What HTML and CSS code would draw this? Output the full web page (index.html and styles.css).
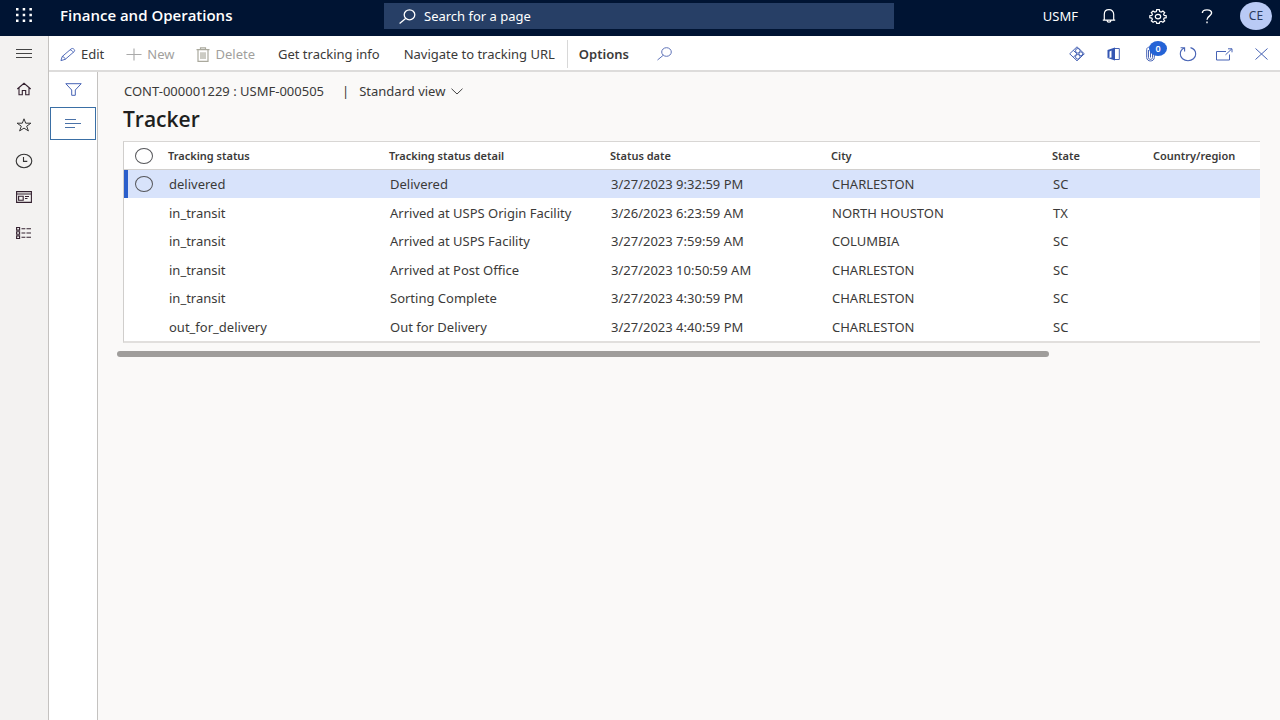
FILE: index.html
```html
<!DOCTYPE html>
<html lang="en">
<head>
    <meta charset="UTF-8">
    <meta name="viewport" content="width=device-width, initial-scale=1.0">
    <title>Tracker - Finance and Operations</title>
    <link rel="stylesheet" href="styles.css">
</head>
<body>
    <header class="topbar">
        <div class="brand">
            <button class="waffle" aria-label="App launcher">
                <svg width="16" height="14" viewBox="0 0 16 14" fill="#fff">
                    <path d="M0 0h2.500v2.500H0zM6.700 0h2.500v2.500H6.700zM13.400 0h2.500v2.500h-2.500zM0 5.700h2.500v2.500H0zM6.700 5.700h2.500v2.500H6.700zM13.400 5.700h2.500v2.500h-2.500zM0 11.400h2.500v2.500H0zM6.700 11.400h2.500v2.500H6.700zM13.400 11.400h2.500v2.500h-2.500z"/>
                </svg>
            </button>
            <span class="brand-name">Finance and Operations</span>
        </div>
        <label class="search">
            <svg width="17" height="15" viewBox="0 0 17 15" fill="none" stroke="#fff" stroke-width="1.3">
                <ellipse cx="10.500" cy="5.800" rx="5.300" ry="5"/>
                <path d="M6.600 9.500L.6 14.400"/>
            </svg>
            <input type="text" placeholder="Search for a page" aria-label="Search for a page">
        </label>
        <div class="account">
            <button class="company">USMF</button>
            <button class="top-icon" aria-label="Notifications">
                <svg width="14" height="14" viewBox="0 0 14 14" fill="none" stroke="#fff" stroke-width="1.2">
                    <path d="M.8 11.200h12.400M2.300 11V5.500C2.300 2.500 4.300.7 7 .7s4.700 1.800 4.700 4.800V11M5 11.400c.2 2.400 3.800 2.400 4 0"/>
                </svg>
            </button>
            <button class="top-icon" aria-label="Settings">
                <svg width="18" height="15" viewBox="0 0 18 15" fill="none" stroke="#fff" stroke-width="1.200">
                    <path d="M7.700.7h2.600l.4 1.800 1.500.6 1.700-1 1.800 1.600-1.100 1.500.6 1.200 2 .3v2l-2 .4-.6 1.200 1.100 1.500-1.800 1.500-1.700-1-1.500.6-.4 1.500H7.700l-.4-1.500-1.500-.6-1.700 1-1.800-1.500 1.100-1.500-.6-1.200-2-.4v-2l2-.3.6-1.200-1.100-1.500L4.100 2.100l1.700 1 1.500-.6z"/>
                    <ellipse cx="9" cy="7.600" rx="2.700" ry="2.300"/>
                </svg>
            </button>
            <button class="top-icon" aria-label="Help">
                <svg width="12" height="15" viewBox="0 0 12 15" fill="none" stroke="#fff" stroke-width="1.400">
                    <path d="M1.400 4C1.400 2 3.200.9 6 .9s4.600 1.300 4.600 3.200C10.600 6.800 6 7 6 10.800M6 12.600v1.600"/>
                </svg>
            </button>
            <button class="avatar">CE</button>
        </div>
    </header>

    <div class="shell">
        <nav class="rail">
            <button aria-label="Expand the navigation pane">
                <svg width="16" height="16" viewBox="0 0 16 16" fill="none" stroke="#444" stroke-width="1"><path d="M0 4.500h16M0 8.500h16M0 12.500h16"/></svg>
            </button>
            <button aria-label="Home">
                <svg width="16" height="16" viewBox="0 0 16 16" fill="none" stroke="#33202f" stroke-width="1.100"><path d="M1.300 8L8 2.300 14.700 8M3 6.800v6.900h3.300V9.500h3.400v4.200H13V6.800"/></svg>
            </button>
            <button aria-label="Favorites">
                <svg width="16" height="16" viewBox="0 0 16 16" fill="none" stroke="#333" stroke-width="1"><path d="M8 1.800l1.700 4.400h5.200l-4.200 3 1.700 4.700L8 11.100 3.600 13.900l1.700-4.700-4.200-3h5.200z"/></svg>
            </button>
            <button aria-label="Recent">
                <svg width="18" height="16" viewBox="0 0 18 16" fill="none" stroke="#333" stroke-width="1.100"><ellipse cx="9" cy="8" rx="7.800" ry="6.700"/><path d="M8.500 4v4.400h3.800"/></svg>
            </button>
            <button aria-label="Workspaces">
                <svg width="16" height="16" viewBox="0 0 16 16" fill="none" stroke="#33202f" stroke-width="1.100"><path d="M.6 2.600h14.800v10.800H.6zM.6 5h14.800M2.600 7.200h4.600v4H2.600zM9 7.500h4M9 9.500h2.500"/></svg>
            </button>
            <button aria-label="Modules">
                <svg width="16" height="16" viewBox="0 0 16 16" fill="none" stroke="#33202f" stroke-width="1.100"><path d="M.6 2.500h3v2.600h-3zM.6 6.700h3v2.600h-3zM.6 10.900h3v2.600h-3zM5.500 3.800h3.800M10.500 3.800H15M5.500 8h3.800M10.500 8H15M5.500 12.200h3.800M10.500 12.200H15"/></svg>
            </button>
        </nav>

        <div class="workspace">
            <div class="actions">
                <button class="action">
                    <svg width="16" height="15" viewBox="0 0 17 15" fill="none" stroke="#4763b5" stroke-width="1"><path d="M1 14l1.300-4.300L12 1.400c1.300-1.200 4.500 1 3.300 2.800L5.600 12.600zM2.300 9.700c1.700.2 3 1.200 3.300 2.900M10.700 2.500c1.600.3 2.900 1.400 3.300 2.800"/></svg>
                    Edit
                </button>
                <button class="action" disabled>
                    <svg width="16" height="15" viewBox="0 0 17 15" fill="none" stroke="#aaa" stroke-width="1.200"><path d="M.5 7.500h16M8.500 1v13"/></svg>
                    New
                </button>
                <button class="action" disabled>
                    <svg width="14" height="15" viewBox="0 0 14 15" fill="none" stroke="#aaa99d" stroke-width="1.200"><path d="M.5 2.700h13M4.500 2.500V.8h5v1.700M2 3v11.300h10V3M5 5.200v6.800M7 5.200v6.800M9 5.200v6.800"/></svg>
                    Delete
                </button>
                <button class="action text">Get tracking info</button>
                <button class="action text">Navigate to tracking URL</button>
                <button class="action options">Options</button>
                <button class="action find" aria-label="Search actions">
                    <svg width="15" height="14" viewBox="0 0 15 14" fill="none" stroke="#5f73b8" stroke-width="1"><ellipse cx="9.500" cy="5" rx="4.800" ry="4.300"/><path d="M6.200 8.300L.5 13"/></svg>
                </button>
                <div class="tools">
                    <button aria-label="Power Apps">
                        <svg width="16" height="16" viewBox="0 0 16 16" fill="none" stroke="#4763b5" stroke-width="1"><path d="M8 .8l7.300 7L8 14.800.7 7.800zM4.300 4.400L8 7.800l-3.700 3.400"/><circle cx="8.800" cy="4.800" r="2.300"/><circle cx="11.800" cy="7.800" r="1.900"/><circle cx="8.800" cy="10.800" r="2.300"/></svg>
                    </button>
                    <button aria-label="Open in Microsoft Office">
                        <svg width="13" height="14" viewBox="0 0 13 14"><path d="M.5 3L8 .5v13L.5 11l4-.5V3.600L2.500 4.500v6L.5 11z" fill="#3557b3"/><path d="M8 1.500h4.300v11H8" fill="none" stroke="#4763b5"/></svg>
                    </button>
                    <button class="attach" aria-label="Attachments">
                        <svg width="9" height="16" viewBox="0 0 9 16" fill="none" stroke="#4763b5" stroke-width="1"><path d="M2.500 4v7.500c0 2.500 4 2.500 4 0V3.500C6.500.3.700.3.700 3.500v8c0 4.600 7.600 4.600 7.600 0V4M4.500 4v7.500"/></svg>
                        <span class="badge">0</span>
                    </button>
                    <button aria-label="Refresh">
                        <svg width="18" height="16" viewBox="0 0 18 16" fill="none" stroke="#4763b5" stroke-width="1.100"><path d="M11.500 1.600C14.500 2.500 16.700 5 16.700 8c0 3.800-3.400 6.700-7.700 6.700S1.300 11.800 1.300 8c0-2.500 1.500-4.800 3.900-5.900M1.600 1.800h4v3.700"/></svg>
                    </button>
                    <button aria-label="Open in new window">
                        <svg width="17" height="13" viewBox="0 0 17 13" fill="none" stroke="#4763b5" stroke-width="1"><path d="M10 3.500H.5v8.500h13V6.500M9.500 6.800L15.700 1M12 .8h4v3.500"/></svg>
                    </button>
                    <button aria-label="Close">
                        <svg width="13" height="12" viewBox="0 0 13 12" fill="none" stroke="#4763b5" stroke-width="1"><path d="M.5.500l12 11M12.500.500l-12 11"/></svg>
                    </button>
                </div>
            </div>

            <div class="content">
                <div class="pane-tabs">
                    <button aria-label="Show filters">
                        <svg width="17" height="13" viewBox="0 0 17 13" fill="none" stroke="#4763b5" stroke-width="1"><path d="M.8.700h15.400L10.300 7v5.300H6.700V7z"/></svg>
                    </button>
                    <button class="selected" aria-label="Show list">
                        <svg width="16" height="9" viewBox="0 0 16 9" fill="none" stroke="#4a72a8" stroke-width="1"><path d="M0 .5h11M0 4.500h16M0 8.500h10"/></svg>
                    </button>
                </div>

                <main class="page">
                    <div class="record">
                        <span>CONT-000001229 : USMF-000505</span>
                        <span class="separator">|</span>
                        <button class="view">
                            Standard view
                            <svg width="12" height="7" viewBox="0 0 12 7" fill="none" stroke="#444" stroke-width="1"><path d="M.5.700L6 6 11.500.700"/></svg>
                        </button>
                    </div>
                    <h1>Tracker</h1>

                    <table class="grid">
                        <colgroup>
                            <col class="col-select">
                            <col class="col-wide">
                            <col class="col-wide">
                            <col class="col-wide">
                            <col class="col-wide">
                            <col class="col-state">
                            <col>
                        </colgroup>
                        <thead>
                            <tr>
                                <th><input type="checkbox" aria-label="Select all rows"></th>
                                <th>Tracking status</th>
                                <th>Tracking status detail</th>
                                <th>Status date</th>
                                <th>City</th>
                                <th>State</th>
                                <th>Country/region</th>
                            </tr>
                        </thead>
                        <tbody>
                            <tr class="current">
                                <td><input type="checkbox" aria-label="Select row"></td>
                                <td>delivered</td>
                                <td>Delivered</td>
                                <td>3/27/2023 9:32:59 PM</td>
                                <td>CHARLESTON</td>
                                <td>SC</td>
                                <td></td>
                            </tr>
                            <tr>
                                <td></td>
                                <td>in_transit</td>
                                <td>Arrived at USPS Origin Facility</td>
                                <td>3/26/2023 6:23:59 AM</td>
                                <td>NORTH HOUSTON</td>
                                <td>TX</td>
                                <td></td>
                            </tr>
                            <tr>
                                <td></td>
                                <td>in_transit</td>
                                <td>Arrived at USPS Facility</td>
                                <td>3/27/2023 7:59:59 AM</td>
                                <td>COLUMBIA</td>
                                <td>SC</td>
                                <td></td>
                            </tr>
                            <tr>
                                <td></td>
                                <td>in_transit</td>
                                <td>Arrived at Post Office</td>
                                <td>3/27/2023 10:50:59 AM</td>
                                <td>CHARLESTON</td>
                                <td>SC</td>
                                <td></td>
                            </tr>
                            <tr>
                                <td></td>
                                <td>in_transit</td>
                                <td>Sorting Complete</td>
                                <td>3/27/2023 4:30:59 PM</td>
                                <td>CHARLESTON</td>
                                <td>SC</td>
                                <td></td>
                            </tr>
                            <tr>
                                <td></td>
                                <td>out_for_delivery</td>
                                <td>Out for Delivery</td>
                                <td>3/27/2023 4:40:59 PM</td>
                                <td>CHARLESTON</td>
                                <td>SC</td>
                                <td></td>
                            </tr>
                        </tbody>
                    </table>
                    <div class="scrollbar"></div>
                </main>
            </div>
        </div>
    </div>
</body>
</html>
```
FILE: styles.css
```css
* {
    box-sizing: border-box;
}
body {
    margin: 0;
    min-height: 100vh;
    display: flex;
    flex-direction: column;
    background: #faf9f8;
    color: #3b3a39;
    font-family: "Noto Sans", "Open Sans", sans-serif;
    font-size: 13px;
    line-height: 20px;
}
button {
    display: flex;
    align-items: center;
    justify-content: center;
    padding: 0;
    border: 0;
    background: none;
    color: inherit;
    font: inherit;
    white-space: nowrap;
}
svg {
    flex: none;
}

/* top bar */
.topbar {
    display: flex;
    height: 36px;
    background: #001433;
    color: #fff;
}
.brand {
    display: flex;
    width: 30%;
    padding-bottom: 6px;
    align-items: center;
}
.waffle {
    width: 48px;
    margin-right: 12px;
}
.brand-name {
    font-family: "Open Sans", sans-serif;
    font-size: 15px;
    font-weight: 600;
}
.search {
    display: flex;
    align-items: center;
    gap: 8px;
    width: 510px;
    height: 26px;
    margin-top: 3px;
    padding-left: 15px;
    background: #273f66;
}
.search input {
    flex: 1;
    padding: 0;
    border: 0;
    background: none;
    color: #fff;
    font: inherit;
}
.search input::placeholder {
    color: #fff;
    opacity: 1;
}
.account {
    display: flex;
    align-items: center;
    margin-left: auto;
    padding: 0 8px 4px 0;
}
.company {
    margin-right: 6px;
}
.top-icon {
    width: 49px;
    height: 32px;
}
.avatar {
    width: 32px;
    height: 28px;
    margin-left: 9px;
    border-radius: 50%;
    background: #b9caf5;
    color: #2b3a5c;
    font-size: 12px;
}

/* left navigation */
.shell {
    display: flex;
    flex: 1;
}
.rail {
    width: 49px;
    border-right: 1px solid #c4c2c0;
    background: #f3f2f1;
}
.rail button {
    width: 48px;
    height: 36px;
    padding-bottom: 2px;
}
.workspace {
    display: flex;
    flex: 1;
    flex-direction: column;
    min-width: 0;
}

/* action pane */
.actions {
    display: flex;
    align-items: center;
    height: 36px;
    padding-top: 2px;
    border-bottom: 2px solid #dddcdb;
    background: #fff;
}
.action {
    gap: 5px;
    height: 28px;
    padding: 0 11px;
}
.action:disabled {
    color: #a19f9d;
}
.action.text {
    padding: 0 12px;
}
.options {
    border-left: 1px solid #d8d8d8;
    font-weight: 600;
}
.find {
    padding-left: 17px;
}
.tools {
    display: flex;
    margin-left: auto;
}
.tools button {
    position: relative;
    width: 37px;
    height: 32px;
}
.badge {
    position: absolute;
    top: 3px;
    left: 17px;
    width: 18px;
    height: 15px;
    border-radius: 50%;
    background: #2463d6;
    color: #fff;
    font-size: 9px;
    font-weight: 600;
    line-height: 15px;
}

/* filter and list tabs */
.content {
    display: flex;
    flex: 1;
}
.pane-tabs {
    width: 49px;
    border-right: 1px solid #c4c2c0;
    background: #fff;
}
.pane-tabs button {
    width: 48px;
    height: 34px;
}
.pane-tabs .selected {
    width: 46px;
    margin: 1px;
    height: 33px;
    border: 1px solid #3a6fa5;
}

/* page */
.page {
    flex: 1;
    min-width: 0;
    padding: 9px 20px 0 25px;
}
.record {
    display: flex;
    padding-left: 1px;
}
.separator {
    margin: 0 10px 0 18px;
}
.view {
    gap: 6px;
}
h1 {
    margin: 5px 0 9px;
    font-family: "Open Sans", sans-serif;
    font-size: 21px;
    font-weight: 600;
    line-height: 26px;
    color: #201f1e;
}
.grid {
    width: 100%;
    table-layout: fixed;
    border-spacing: 0;
    border-top: 1px solid #d8d6d4;
    border-left: 1px solid #d0cecc;
    border-bottom: 2px solid #e1dfdd;
    background: #fff;
}
.col-select {
    width: 44px;
}
.col-wide {
    width: 221px;
}
.col-state {
    width: 101px;
}
.grid th {
    height: 28px;
    padding: 0;
    border-bottom: 1px solid #d2d0ce;
    font-size: 11px;
    font-weight: 600;
    text-align: left;
}
.grid td {
    height: 28px;
    padding: 0 0 0 1px;
    white-space: nowrap;
}
.grid tbody tr:nth-child(even) td {
    height: 29px;
}
.grid .current td {
    background: #d8e3fb;
}
.grid th:first-child {
    padding-left: 11px;
}
.grid .current td:first-child {
    padding-left: 7px;
    border-left: 4px solid #2b5fcb;
}
.grid input {
    display: block;
    appearance: none;
    width: 18px;
    height: 16px;
    margin: 0;
    border: 1px solid #55565a;
    border-radius: 50%;
}
.scrollbar {
    width: 82%;
    height: 6px;
    margin: 8px 0 0 -6px;
    border-radius: 3px;
    background: #9f9d9b;
}
```
